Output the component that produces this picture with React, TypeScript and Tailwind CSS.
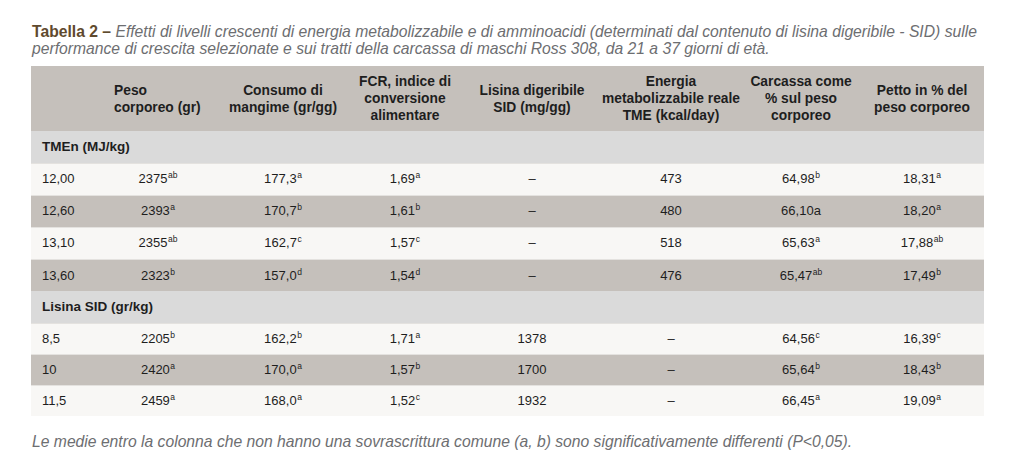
import React from "react";

type Cell = [string, string?];

const tmen: { c: Cell[]; dark: boolean }[] = [
  { dark: false, c: [["12,00"], ["2375", "ab"], ["177,3", "a"], ["1,69", "a"], ["–"], ["473"], ["64,98", "b"], ["18,31", "a"]] },
  { dark: true, c: [["12,60"], ["2393", "a"], ["170,7", "b"], ["1,61", "b"], ["–"], ["480"], ["66,10a"], ["18,20", "a"]] },
  { dark: false, c: [["13,10"], ["2355", "ab"], ["162,7", "c"], ["1,57", "c"], ["–"], ["518"], ["65,63", "a"], ["17,88", "ab"]] },
  { dark: true, c: [["13,60"], ["2323", "b"], ["157,0", "d"], ["1,54", "d"], ["–"], ["476"], ["65,47", "ab"], ["17,49", "b"]] },
];

const lis: { c: Cell[]; dark: boolean }[] = [
  { dark: false, c: [["8,5"], ["2205", "b"], ["162,2", "b"], ["1,71", "a"], ["1378"], ["–"], ["64,56", "c"], ["16,39", "c"]] },
  { dark: true, c: [["10"], ["2420", "a"], ["170,0", "a"], ["1,57", "b"], ["1700"], ["–"], ["65,64", "b"], ["18,43", "b"]] },
  { dark: false, c: [["11,5"], ["2459", "a"], ["168,0", "a"], ["1,52", "c"], ["1932"], ["–"], ["66,45", "a"], ["19,09", "a"]] },
];

function Row({ c, dark, tall }: { c: Cell[]; dark: boolean; tall: boolean }) {
  return (
    <tr
      className={`${dark ? "bg-[#c5c0bb]" : "bg-[#f8f7f5]"} border-t border-[#e4e2df] ${
        tall ? "h-[32px]" : "h-[31px]"
      }`}
    >
      {c.map(([v, s], i) => (
        <td
          key={i}
          className={`${i === 0 ? "text-left pl-[11px]" : "text-center"} align-middle p-0 text-[13px] text-[#1e1e1e]`}
        >
          {v}
          {s && <sup className="text-[8.5px] top-[-5px] ml-[0.5px]">{s}</sup>}
        </td>
      ))}
    </tr>
  );
}

export default function App() {
  const widths = [65, 124, 126, 118, 136, 142, 118, 124];
  return (
    <div className="w-[1031px] h-[468px] bg-white pt-[23px] pl-[32px] font-['Liberation_Sans',Arial,sans-serif]">
      <p className="text-[15.7px] leading-[17px] text-[#6d6e71] italic w-[995px] whitespace-nowrap">
        <span className="not-italic font-bold text-[#5f4a2e]">Tabella 2 –</span> Effetti di livelli crescenti di
        energia metabolizzabile e di amminoacidi (determinati dal contenuto di lisina digeribile - SID) sulle
        <br />
        performance di crescita selezionate e sui tratti della carcassa di maschi Ross 308, da 21 a 37 giorni di età.
      </p>
      <table className="table-fixed border-collapse w-[953px] mt-[9px] -ml-[1px]">
        <colgroup>
          {widths.map((w, i) => (
            <col key={i} style={{ width: w }} />
          ))}
        </colgroup>
        <thead>
          <tr className="bg-[#c5c0bb] h-[65px] text-[13.8px] leading-[17px] font-bold text-[#1e1e1e]">
            <th className="p-0"></th>
            <th className="p-0 text-left pl-[18px] font-bold">
              Peso
              <br />
              corporeo (gr)
            </th>
            <th className="p-0 text-center font-bold">
              Consumo di
              <br />
              mangime (gr/gg)
            </th>
            <th className="p-0 text-center font-bold">
              FCR, indice di
              <br />
              conversione
              <br />
              alimentare
            </th>
            <th className="p-0 text-center font-bold">
              Lisina digeribile
              <br />
              SID (mg/gg)
            </th>
            <th className="p-0 text-center font-bold whitespace-nowrap">
              Energia
              <br />
              metabolizzabile reale
              <br />
              TME (kcal/day)
            </th>
            <th className="p-0 text-center font-bold">
              Carcassa come
              <br />% sul peso
              <br />
              corporeo
            </th>
            <th className="p-0 text-center font-bold">
              Petto in % del
              <br />
              peso corporeo
            </th>
          </tr>
        </thead>
        <tbody>
          <tr className="bg-[#dadada] h-[32px]">
            <td colSpan={8} className="p-0 pl-[11px] text-[13.5px] font-bold text-[#1e1e1e]">
              TMEn (MJ/kg)
            </td>
          </tr>
          {tmen.map((r, i) => (
            <Row key={i} {...r} tall />
          ))}
          <tr className="bg-[#dadada] h-[32px]">
            <td colSpan={8} className="p-0 pl-[11px] text-[13.5px] font-bold text-[#1e1e1e]">
              Lisina SID (gr/kg)
            </td>
          </tr>
          {lis.map((r, i) => (
            <Row key={i} {...r} tall={false} />
          ))}
        </tbody>
      </table>
      <p className="mt-[14px] text-[15.7px] italic text-[#6d6e71] whitespace-nowrap">
        Le medie entro la colonna che non hanno una sovrascrittura comune (a, b) sono significativamente differenti
        (P&lt;0,05).
      </p>
    </div>
  );
}
